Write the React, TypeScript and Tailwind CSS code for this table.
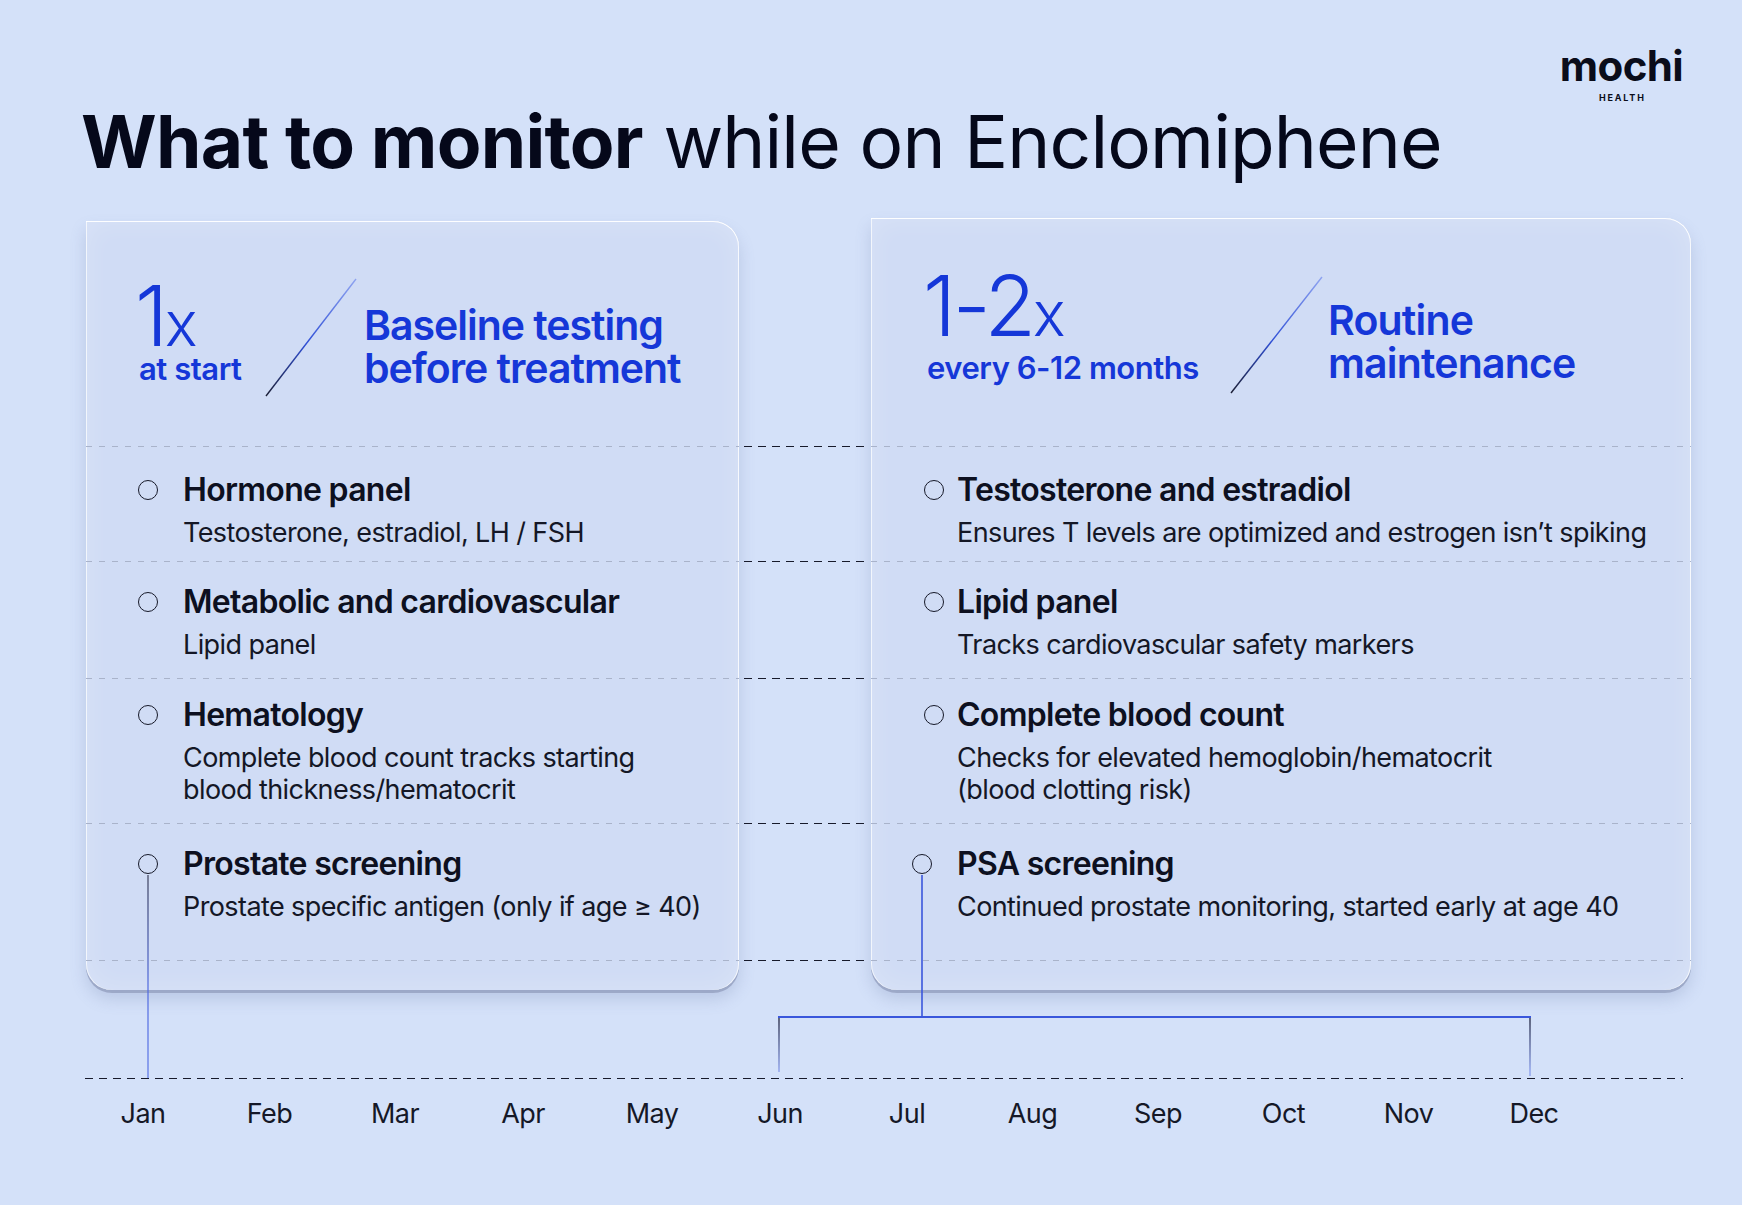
import React from "react"

type Row = {
  title: string
  sub: string[]
  h: string
  pt: string
  dot: string
}

const leftRows: Row[] = [
  { title: "Hormone panel", sub: ["Testosterone, estradiol, LH / FSH"], h: "h-[114px]", pt: "pt-[26px]", dot: "ml-[52px] mr-[25px]" },
  { title: "Metabolic and cardiovascular", sub: ["Lipid panel"], h: "h-[116px]", pt: "pt-[23px]", dot: "ml-[52px] mr-[25px]" },
  { title: "Hematology", sub: ["Complete blood count tracks starting", "blood thickness/hematocrit"], h: "h-[144px]", pt: "pt-[19px]", dot: "ml-[52px] mr-[25px]" },
  { title: "Prostate screening", sub: ["Prostate specific antigen (only if age \u2265 40)"], h: "h-[136px]", pt: "pt-[23px]", dot: "ml-[52px] mr-[25px]" },
]

const rightRows: Row[] = [
  { title: "Testosterone and estradiol", sub: ["Ensures T levels are optimized and estrogen isn\u2019t spiking"], h: "h-[114px]", pt: "pt-[26px]", dot: "ml-[53px] mr-[13px]" },
  { title: "Lipid panel", sub: ["Tracks cardiovascular safety markers"], h: "h-[116px]", pt: "pt-[23px]", dot: "ml-[53px] mr-[13px]" },
  { title: "Complete blood count", sub: ["Checks for elevated hemoglobin/hematocrit", "(blood clotting risk)"], h: "h-[144px]", pt: "pt-[19px]", dot: "ml-[53px] mr-[13px]" },
  { title: "PSA screening", sub: ["Continued prostate monitoring, started early at age 40"], h: "h-[136px]", pt: "pt-[23px]", dot: "ml-[41px] mr-[25px]" },
]

const months = ["Jan", "Feb", "Mar", "Apr", "May", "Jun", "Jul", "Aug", "Sep", "Oct", "Nov", "Dec"]

const greyDash =
  "h-px bg-[linear-gradient(to_right,#a9b3ca_50%,transparent_50%)] bg-[length:13px_1px] bg-repeat-x"
const blackDash =
  "h-px bg-[linear-gradient(to_right,#171a2b_55%,transparent_55%)] bg-[length:14px_1px] bg-repeat-x"

function Slash({ id, cls }: { id: string; cls: string }) {
  return (
    <svg className={cls} viewBox="0 0 92 119" preserveAspectRatio="none">
      <defs>
        <linearGradient id={id} x1="0" y1="1" x2="1" y2="0">
          <stop offset="0" stopColor="#1b1e33" />
          <stop offset="0.45" stopColor="#2f4fd6" />
          <stop offset="1" stopColor="#8ea3f0" />
        </linearGradient>
      </defs>
      <line x1="1" y1="118" x2="91" y2="1" stroke={`url(#${id})`} strokeWidth="1.4" />
    </svg>
  )
}

function Rows({ rows, subPl }: { rows: Row[]; subPl: string }) {
  return (
    <>
      {rows.map((r) => (
        <div key={r.title}>
          <div className={greyDash} />
          <div className={`${r.h} ${r.pt}`}>
            <div className="flex items-center h-[34px]">
              <span className={`${r.dot} w-5 h-5 shrink-0 rounded-full border-[1.5px] border-[#161929]`} />
              <span className="text-[32px] leading-[34px] font-semibold tracking-[-0.022em] text-[#0d1020] whitespace-nowrap">
                {r.title}
              </span>
            </div>
            <div className={`${subPl} mt-[10px] text-[27px] leading-[32px] tracking-[-0.022em] text-[#141726] whitespace-nowrap`}>
              {r.sub.map((s, i) => (
                <span key={s}>
                  {i > 0 && <br />}
                  {s}
                </span>
              ))}
            </div>
          </div>
        </div>
      ))}
      <div className={greyDash} />
    </>
  )
}

const cardCls =
  "bg-[#d0dcf5] rounded-tr-[26px] rounded-b-[26px] shadow-[inset_0_1px_0_rgba(255,255,255,0.95),inset_1px_0_0_rgba(255,255,255,0.7),inset_-1px_0_0_rgba(255,255,255,0.8),inset_0_0_28px_rgba(255,255,255,0.22),0_3px_0_rgba(150,162,194,0.85),0_9px_16px_rgba(90,110,160,0.22)]"

export default function App() {
  return (
    <div className="relative w-[1742px] h-[1205px] overflow-hidden bg-[#d4e1f9] font-[family-name:Inter,'Noto_Sans',sans-serif] text-[#0b0e1c]">
      {/* header */}
      <div className="h-[218px] flex justify-between items-start pl-[81px] pr-[59px]">
        <h1 className="pt-[105px] text-[73px] leading-[73px] text-[#05081a] whitespace-nowrap">
          <span className="font-bold tracking-[-0.01em]">What to monitor</span>{" "}
          <span className="font-normal tracking-[-0.012em]">while on Enclomiphene</span>
        </h1>
        <div className="pt-[45px] flex flex-col items-center">
          <div className="text-[42px] leading-[42px] font-bold tracking-[-0.015em] text-[#0a0c1a]">mochi</div>
          <div className="mt-[6px] pl-[0.2em] text-[9px] leading-[10px] font-bold tracking-[0.2em] text-[#0a0c1a]">HEALTH</div>
        </div>
      </div>

      {/* cards */}
      <div className="flex items-start pl-[86px]">
        <div className={`mt-[3px] w-[653px] ${cardCls}`}>
          <div className="h-[225px] flex items-start">
            <div className="ml-[49px] w-[130px] shrink-0 pt-[59px] text-[#1537d8]">
              <div className="text-[84px] leading-[72px] whitespace-nowrap">
                <span className="font-light tracking-[-0.04em]">1</span>
                <span className="text-[62px] leading-[50px] font-light">x</span>
              </div>
              <div className="ml-[4px] text-[31px] leading-[34px] font-semibold tracking-[-0.015em] whitespace-nowrap">at start</div>
            </div>
            <Slash id="slashL" cls="w-[92px] h-[119px] mt-[57px] shrink-0" />
            <div className="ml-[7px] mt-[83px] text-[41px] leading-[43px] font-semibold tracking-[-0.025em] text-[#1537d8] whitespace-nowrap">
              Baseline testing
              <br />
              before treatment
            </div>
          </div>
          <Rows rows={leftRows} subPl="pl-[97px]" />
          <div className="h-[29px]" />
        </div>

        <div className="w-[132px] shrink-0 px-[5px]">
          <div className="h-[228px]" />
          <div className={blackDash} />
          <div className="h-[114px]" />
          <div className={blackDash} />
          <div className="h-[116px]" />
          <div className={blackDash} />
          <div className="h-[144px]" />
          <div className={blackDash} />
          <div className="h-[136px]" />
          <div className={blackDash} />
        </div>

        <div className={`w-[820px] ${cardCls}`}>
          <div className="h-[228px] flex items-start">
            <div className="ml-[52px] w-[307px] shrink-0 pt-[52px] text-[#1537d8]">
              <div className="text-[84px] leading-[72px] whitespace-nowrap">
                <span className="font-light tracking-[-0.04em]">1-2</span>
                <span className="text-[62px] leading-[50px] font-light">x</span>
              </div>
              <div className="mt-[9px] ml-[4px] text-[31px] leading-[34px] font-semibold tracking-[-0.015em] whitespace-nowrap">
                every 6-12 months
              </div>
            </div>
            <Slash id="slashR" cls="w-[93px] h-[118px] mt-[58px] shrink-0" />
            <div className="ml-[5px] mt-[81px] text-[41px] leading-[43px] font-semibold tracking-[-0.02em] text-[#1537d8] whitespace-nowrap">
              Routine
              <br />
              maintenance
            </div>
          </div>
          <Rows rows={rightRows} subPl="pl-[86px]" />
          <div className="h-[29px]" />
        </div>
      </div>

      {/* timeline */}
      <div className="mt-[88px] ml-[85px] w-[1598px]">
        <div className={blackDash} />
      </div>
      <div className="mt-[19px] ml-[79px] w-[1518px] grid grid-cols-[128px_125px_126px_130px_128px_128px_126px_125px_126px_125px_125px_126px] text-center text-[27px] leading-[32px] tracking-[-0.02em] text-[#151827]">
        {months.map((m) => (
          <div key={m}>{m}</div>
        ))}
      </div>

      {/* connectors */}
      <svg className="pointer-events-none absolute inset-0" width="1742" height="1205" viewBox="0 0 1742 1205">
        <defs>
          <linearGradient id="janLine" gradientUnits="userSpaceOnUse" x1="0" y1="875" x2="0" y2="1078">
            <stop offset="0" stopColor="#3b3f58" />
            <stop offset="0.55" stopColor="#4f69e0" />
            <stop offset="1" stopColor="#5a74e6" />
          </linearGradient>
          <linearGradient id="tickL" gradientUnits="userSpaceOnUse" x1="0" y1="1017" x2="0" y2="1072">
            <stop offset="0" stopColor="#2a2e48" />
            <stop offset="1" stopColor="#8ea2ee" />
          </linearGradient>
        </defs>
        <line x1="148" y1="875" x2="148" y2="1078" stroke="url(#janLine)" strokeWidth="1.2" />
        <line x1="922" y1="875" x2="922" y2="1017" stroke="#3a57dc" strokeWidth="1.6" />
        <line x1="778" y1="1017" x2="1531" y2="1017" stroke="#3a57dc" strokeWidth="2" />
        <line x1="779" y1="1018" x2="779" y2="1072" stroke="url(#tickL)" strokeWidth="1.4" />
        <line x1="1530" y1="1018" x2="1530" y2="1076" stroke="url(#tickL)" strokeWidth="1.4" />
      </svg>
    </div>
  )
}
